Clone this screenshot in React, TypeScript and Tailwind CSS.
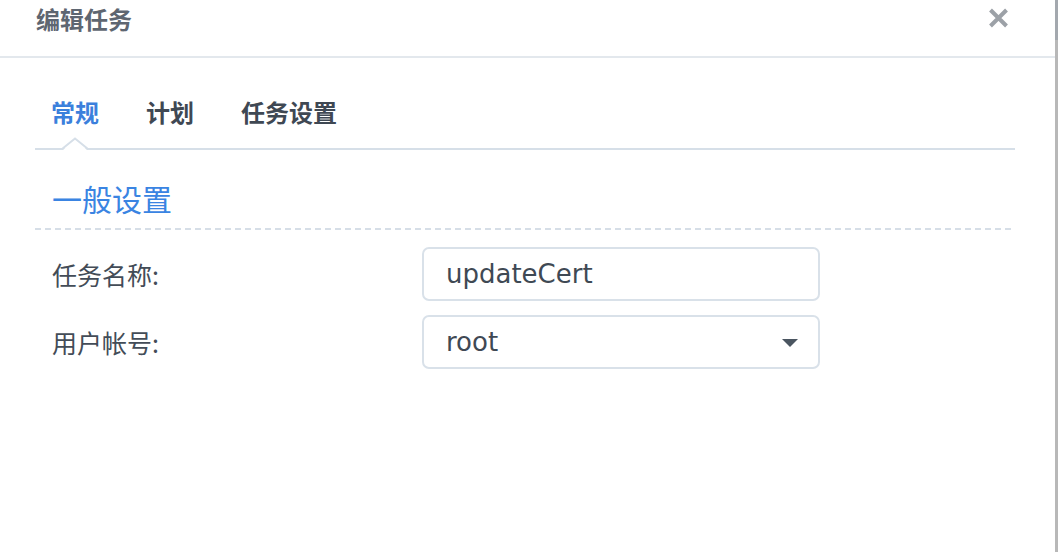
const cjk = "font-['Noto_Sans_CJK_SC',sans-serif]";

const tabs = [
  { label: "常规", active: true },
  { label: "计划", active: false },
  { label: "任务设置", active: false },
];

function Field({ label, children }: { label: string; children: React.ReactNode }) {
  return (
    <div className="flex h-[54px] items-center">
      <div className={`w-[387px] pl-[17px] text-[25px] leading-[25px] text-[#434c57] ${cjk}`}>{label}</div>
      <div className="relative flex h-[54px] w-[398px] items-center rounded-[7px] border-2 border-[#d9e1e9] bg-white pl-[22px] pr-[20px]">
        {children}
      </div>
    </div>
  );
}

export default function App() {
  return (
    <div className="flex h-[552px] w-[1058px] overflow-hidden bg-white">
      <div className="flex w-[1055px] flex-col bg-white">
        {/* Header */}
        <div className="flex h-[58px] shrink-0 items-start justify-between border-b-2 border-[#e3e8ed] pl-[36px] pr-[46px] pt-[7px]">
          <h1 className={`text-[24px] font-bold leading-[24px] text-[#5e6671] ${cjk}`}>编辑任务</h1>
          <svg width="21" height="20" viewBox="0 0 21 20" className="mt-[1px]">
            <path d="M2.5 2 L18.5 18 M18.5 2 L2.5 18" stroke="#9ca1a7" strokeWidth="4" strokeLinecap="butt" />
          </svg>
        </div>

        {/* Tabs */}
        <div className="relative ml-[35px] mr-[40px] flex gap-[47px] border-b-2 border-[#d6dfe8] pb-[24px] pl-[16px] pt-[42px]">
          {tabs.map((t) => (
            <span
              key={t.label}
              className={`text-[24px] font-bold leading-[24px] ${cjk} ${t.active ? "text-[#3b80dc]" : "text-[#3f4853]"}`}
            >
              {t.label}
            </span>
          ))}
          <svg width="26" height="14" viewBox="0 0 26 14" className="absolute bottom-[-3px] left-[27px]">
            <polygon points="0,14 13,1.5 26,14" fill="white" />
            <polyline points="0,12 13,1.5 26,12" fill="none" stroke="#d6dfe8" strokeWidth="2" />
          </svg>
        </div>

        {/* Section */}
        <div className="ml-[35px] mr-[40px] flex flex-col">
          <h2 className={`mt-[33px] pl-[17px] text-[30px] leading-[30px] text-[#3a84e2] ${cjk}`}>一般设置</h2>
          <div className="mt-[15px] h-[2px] bg-[repeating-linear-gradient(to_right,#d6dee7_0_6px,transparent_6px_10px)]" />

          <div className="mt-[17px] flex flex-col gap-[14px]">
            <Field label="任务名称:">
              <span className="font-['DejaVu_Sans',sans-serif] text-[26px] leading-none text-[#3f4954]">updateCert</span>
            </Field>
            <Field label="用户帐号:">
              <span className="font-['DejaVu_Sans',sans-serif] text-[26px] leading-none text-[#3f4954]">root</span>
              <svg width="16" height="8" viewBox="0 0 16 8" className="absolute right-[20px] top-[22px]">
                <polygon points="0,0 16,0 8,8" fill="#4a5560" />
              </svg>
            </Field>
          </div>
        </div>
      </div>
      <div className="flex w-[3px] flex-col bg-[#b8b8b8]">
        <div className="h-[40px] bg-[#a3a8ae]" />
      </div>
    </div>
  );
}
